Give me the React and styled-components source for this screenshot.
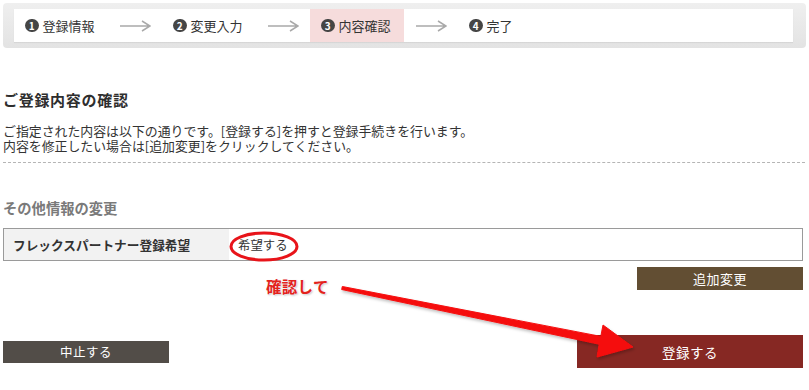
import React from 'react';
import styled, { createGlobalStyle } from 'styled-components';

const GlobalStyle = createGlobalStyle`
  html, body {
    margin: 0;
    padding: 0;
    background: #fff;
  }
  body {
    font-family: "Noto Sans CJK JP", "Noto Sans", sans-serif;
    color: #333;
  }
`;

const steps = [
  { no: 1, label: '登録情報' },
  { no: 2, label: '変更入力' },
  { no: 3, label: '内容確認', active: true },
  { no: 4, label: '完了' },
];

const Page = styled.div`
  position: relative;
  width: 809px;
  height: 390px;
  box-sizing: border-box;
  padding: 3px 6px 0 3px;
  overflow: hidden;
`;

const StepperFrame = styled.div`
  margin-right: -3px;
  height: 45px;
  box-sizing: border-box;
  padding: 6px 13px 6px 11px;
  border-radius: 4px;
  background: linear-gradient(#efefef, #e3e3e3);
`;

const StepperBar = styled.div`
  height: 33px;
  display: flex;
  background: #fff;
  box-shadow: 0 1px 1px rgba(0, 0, 0, 0.06);
`;

const Step = styled.div`
  width: 94px;
  box-sizing: border-box;
  padding-left: 11px;
  display: flex;
  align-items: center;
  gap: 4px;
  background: ${(p) => (p.$active ? '#f6dcdc' : 'transparent')};
  font-size: 13px;
  color: #333;
`;

const StepNo = styled.span`
  width: 13.5px;
  height: 13.5px;
  border-radius: 50%;
  background: #454545;
  color: #fff;
  font-size: 10px;
  font-weight: bold;
  display: flex;
  align-items: center;
  justify-content: center;
  line-height: 1;
`;

const StepArrow = styled.div`
  width: 54px;
  display: flex;
  align-items: center;
  justify-content: center;
`;

const Heading = styled.h2`
  margin: 42px 0 0;
  font-size: 15px;
  line-height: 20px;
  letter-spacing: 0.7px;
  font-weight: bold;
  color: #2e2e2e;
`;

const Lead = styled.div`
  margin-top: 13px;
  font-size: 12.9px;
  color: #333;
`;

const LeadLine = styled.div`
  height: 15px;
  line-height: 15px;
  white-space: nowrap;
`;

const Divider = styled.hr`
  margin: 9px -2px 0 0;
  border: 0;
  border-top: 1px dashed #b5b5b5;
`;

const SubHeading = styled.h3`
  margin: 35px 0 0;
  font-size: 14.3px;
  line-height: 20px;
  font-weight: bold;
  color: #7a7a7a;
`;

const Table = styled.div`
  margin-top: 10px;
  display: flex;
  height: 33px;
  box-sizing: border-box;
  border: 1px solid #9a9a9a;
`;

const LabelCell = styled.div`
  width: 225px;
  box-sizing: border-box;
  padding-left: 9px;
  display: flex;
  align-items: center;
  background: #f2f2f2;
  font-size: 12.7px;
  font-weight: bold;
  color: #333;
`;

const ValueCell = styled.div`
  flex: 1;
  padding-left: 9px;
  display: flex;
  align-items: center;
  font-size: 12.4px;
  color: #333;
`;

const EditRow = styled.div`
  margin-top: 6px;
  display: flex;
  justify-content: flex-end;
`;

const Button = styled.button`
  border: 0;
  padding: 0;
  width: ${(p) => p.$w}px;
  height: ${(p) => p.$h}px;
  background: ${(p) => p.$bg};
  color: #fff;
  font-family: inherit;
  font-size: ${(p) => p.$fs || 13}px;
  letter-spacing: 0.5px;
  cursor: pointer;
`;

const ActionRow = styled.div`
  margin-top: 45px;
  display: flex;
  align-items: center;
  justify-content: space-between;
`;

const Overlay = styled.svg`
  position: absolute;
  left: 0;
  top: 0;
  pointer-events: none;
`;

const Note = styled.span`
  position: absolute;
  left: 266px;
  top: 275px;
  font-size: 15.5px;
  font-weight: bold;
  color: #e3221c;
  letter-spacing: 0.3px;
  text-shadow: 0 0 2px #fff, 1px 1px 2px rgba(0, 0, 0, 0.25);
`;

const Arrow = () => (
  <svg width="31" height="12" viewBox="0 0 31 12">
    <path d="M0 6 H30 M22 1 L30 6 L22 11" fill="none" stroke="#a9a9a9" strokeWidth="1.5" />
  </svg>
);

export default function App() {
  return (
    <>
      <GlobalStyle />
      <Page>
        <StepperFrame>
          <StepperBar>
            {steps.map((s, i) => (
              <React.Fragment key={s.no}>
                {i > 0 && (
                  <StepArrow>
                    <Arrow />
                  </StepArrow>
                )}
                <Step $active={s.active}>
                  <StepNo>{s.no}</StepNo>
                  {s.label}
                </Step>
              </React.Fragment>
            ))}
          </StepperBar>
        </StepperFrame>

        <Heading>ご登録内容の確認</Heading>
        <Lead>
          <LeadLine>ご指定された内容は以下の通りです。[登録する]を押すと登録手続きを行います。</LeadLine>
          <LeadLine>内容を修正したい場合は[追加変更]をクリックしてください。</LeadLine>
        </Lead>
        <Divider />

        <SubHeading>その他情報の変更</SubHeading>
        <Table>
          <LabelCell>フレックスパートナー登録希望</LabelCell>
          <ValueCell>希望する</ValueCell>
        </Table>
        <EditRow>
          <Button $w={166} $h={23} $bg="#624e33">追加変更</Button>
        </EditRow>

        <ActionRow>
          <Button $w={166} $h={22} $bg="#524d48" $fs={12.5}>中止する</Button>
          <Button $w={226} $h={33} $bg="#862823" $fs={13.5}>登録する</Button>
        </ActionRow>

        <Overlay width="809" height="390" viewBox="0 0 809 390">
          <defs>
            <filter id="sh" x="-10%" y="-30%" width="120%" height="160%">
              <feDropShadow dx="1" dy="2" stdDeviation="1.5" floodColor="#000" floodOpacity="0.25" />
            </filter>
          </defs>
          <ellipse cx="264" cy="246.5" rx="33" ry="13.5" fill="none" stroke="#e8141a" strokeWidth="3" />
          <polygon
            points="342.3,286.5 600.8,336.4 603,325 633,347 597,357 599.2,344.2 341.7,289.5"
            fill="#f50c0c"
            stroke="#f50c0c"
            strokeWidth="1"
            strokeLinejoin="round"
            filter="url(#sh)"
          />
        </Overlay>
        <Note>確認して</Note>
      </Page>
    </>
  );
}
